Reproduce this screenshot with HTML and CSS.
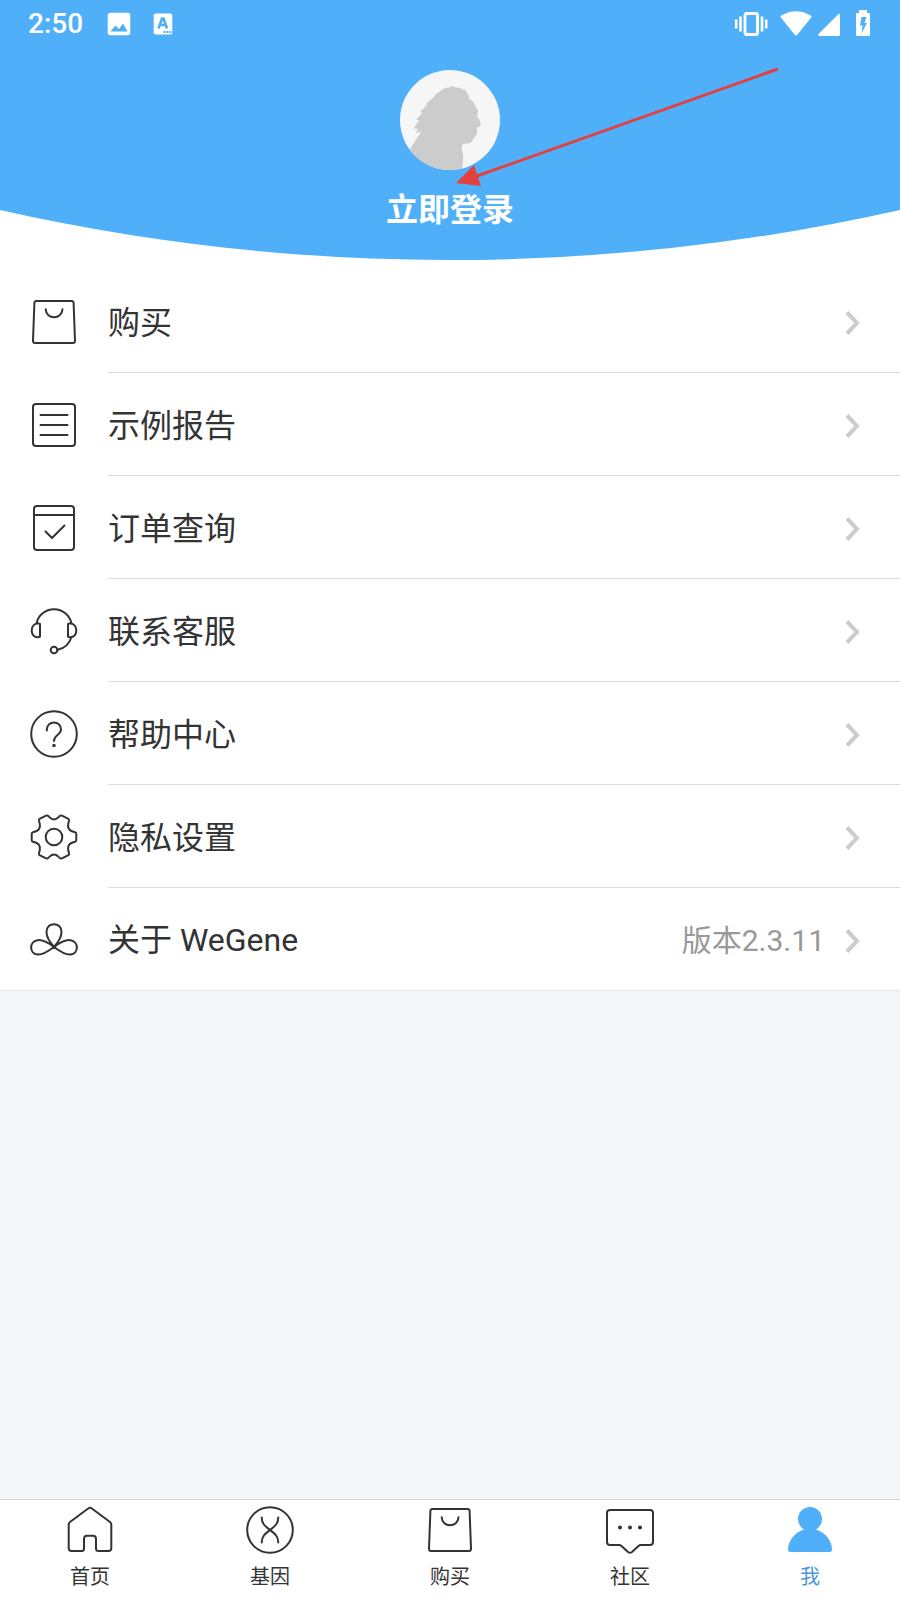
FILE: index.html
```html
<!DOCTYPE html>
<html lang="zh-CN">
<head>
<meta charset="utf-8">
<meta name="viewport" content="width=device-width, initial-scale=1">
<title>WeGene</title>
<link rel="stylesheet" href="styles.css">
</head>
<body>
<svg class="symbols" aria-hidden="true">
  <symbol id="bag" viewBox="0 0 48 48"><path d="M6.500 3H41.500Q43.500 3 43.600 5L45 42.500Q45 45 43 45H5Q3 45 3 42.500L4.400 5Q4.500 3 6.500 3Z"/><path d="M15.700 11.300C16 22 32 22 32.500 11.300"/></symbol>
  <symbol id="chevron" viewBox="0 0 16 24"><path d="M2 1.500L12 12L2 22.500"/></symbol>
</svg>
<div class="page">
  <header class="hero">
    <svg class="hero-curve" viewBox="0 0 900 260" preserveAspectRatio="none" aria-hidden="true"><path d="M0 0H900V210A2050 2050 0 0 1 0 210Z"/></svg>
    <div class="status">
      <div class="status-side">
        <span class="clock">2:50</span>
        <svg class="image-icon" width="24" height="24" viewBox="0 0 24 24" aria-hidden="true"><rect x=".7" y=".7" width="22.600" height="22.600" rx="2.500" fill="#fff"/><path d="M3.500 19.500L8.500 13.500L12 17L16 11.500L20.500 19.500Z" fill="#4fb0f9"/></svg>
        <svg width="20" height="24" viewBox="0 0 20 24" aria-hidden="true"><rect x=".7" y="1.500" width="18.600" height="21" rx="2" fill="#fff"/><path d="M5.500 16.500L9 6.500H10.500L14 16.500M7 13H12.500" fill="none" stroke="#4fb0f9" stroke-width="2.600"/><path d="M10.500 20H18.500" stroke="#4fb0f9" stroke-width="1.800" stroke-dasharray="2 1"/></svg>
      </div>
      <div class="status-side">
        <svg width="34" height="28" viewBox="0 0 34 28" aria-hidden="true"><rect x="11" y="3.500" width="12.500" height="21" rx="1.500" fill="none" stroke="#fff" stroke-width="2.800"/><path d="M2.200 9.500V18.500M6.500 6.500V21.500M28 6.500V21.500M32.200 9.500V18.500" stroke="#fff" stroke-width="2.600"/></svg>
        <svg class="wifi-icon" width="32" height="28" viewBox="0 0 32 28" aria-hidden="true"><path d="M.8 7.500Q0 6.500 1.200 5.600Q16-3 30.800 5.600Q32 6.500 31.200 7.500L17.500 24.600Q16 26.500 14.500 24.600Z" fill="#fff"/></svg>
        <svg width="24" height="28" viewBox="0 0 24 28" aria-hidden="true"><path d="M1.500 24L21.500 4Q23 3 23 5V25Q23 26 22 26H2Q.5 25.500 1.500 24Z" fill="#fff"/></svg>
        <svg class="battery-icon" width="16" height="28" viewBox="0 0 16 28" aria-hidden="true"><path d="M4 0H12V3H14Q15 3 15 4V25Q15 26 14 26H2Q1 26 1 25V4Q1 3 2 3H4Z" fill="#fff"/><path d="M6.500 7H11.500L9.500 13H12L6.500 23.500L7.500 15.500H5Z" fill="#4fb0f9"/></svg>
      </div>
    </div>
    <a class="login" href="#login">
      <svg class="avatar" viewBox="0 0 100 100" aria-hidden="true">
        <defs><clipPath id="disc"><circle cx="50" cy="50" r="50"/></clipPath></defs>
        <circle cx="50" cy="50" r="50" fill="#f6f6f6"/>
        <path clip-path="url(#disc)" fill="#ccc" d="M0 95L9.300 80L21.700 61L16 63.500L17.700 58.700L13.500 58.500L19.500 50L16 49.500L22.700 42.700L20 42.300L27.300 34.500L26 34L35 26L34.500 25L40 21.500Q44 17.500 50 17.500L51 16L57 18L59 17.500L64 20L65 19.300L69 26.500L69 29Q74 31 75 35.500L78 40.700L77 46.700Q80 49 80.700 53Q81 57 77.300 57.300Q76.500 59 77.300 63L73.500 69Q71 73.500 68 73.500Q64 73 62.500 74.500Q61 78 63 84Q63.500 91 62 98.700L60 102H0Z"/>
      </svg>
      <span class="login-text">立即登录</span>
    </a>
    <svg class="pointer" viewBox="0 0 326 122" aria-hidden="true"><path d="M323 2L22 109" stroke="#e34040" stroke-width="3" fill="none"/><path d="M1 116L19 98L26 119Z" fill="#e34040"/></svg>
  </header>

  <main>
    <ul class="menu">
      <li><a href="#buy"><svg class="icon" aria-hidden="true"><use href="#bag"/></svg><span class="row"><span class="label">购买</span><svg class="chevron" aria-hidden="true"><use href="#chevron"/></svg></span></a></li>
      <li><a href="#report"><svg class="icon" viewBox="0 0 48 48" aria-hidden="true"><rect x="3" y="3" width="42" height="42" rx="3"/><path d="M10.500 14H37.500M10.500 24H37.500M10.500 34H37.500"/></svg><span class="row"><span class="label">示例报告</span><svg class="chevron" aria-hidden="true"><use href="#chevron"/></svg></span></a></li>
      <li><a href="#orders"><svg class="icon" viewBox="0 0 48 48" aria-hidden="true"><rect x="4" y="2" width="40" height="44" rx="3"/><path d="M4 11H44M15.500 27.500L22 34L34.500 21.500"/></svg><span class="row"><span class="label">订单查询</span><svg class="chevron" aria-hidden="true"><use href="#chevron"/></svg></span></a></li>
      <li><a href="#service"><svg class="icon" viewBox="0 0 48 48" aria-hidden="true"><path d="M6.500 16.500A17.800 17.500 0 0 1 41.500 16.500M10 17V29.500Q10 30 9 30C4.500 31 1.700 28 1.700 23.500S4.500 16 9 16.500Q10 16.500 10 17ZM38 17V29.500Q38 30 39 30C43.500 31 46.300 28 46.300 23.500S43.500 16 39 16.500Q38 16.500 38 17ZM41.500 30Q38 41 27.500 42.700"/><circle cx="24" cy="43" r="3.300"/></svg><span class="row"><span class="label">联系客服</span><svg class="chevron" aria-hidden="true"><use href="#chevron"/></svg></span></a></li>
      <li><a href="#help"><svg class="icon" viewBox="0 0 48 48" aria-hidden="true"><circle cx="24" cy="24" r="22.800"/><path d="M16.800 20.500V19.500C17 10 31 10 31 19.500C31 25 24 24.500 24 31"/><circle class="solid" cx="24" cy="35.500" r=".8"/></svg><span class="row"><span class="label">帮助中心</span><svg class="chevron" aria-hidden="true"><use href="#chevron"/></svg></span></a></li>
      <li><a href="#privacy"><svg class="icon" viewBox="0 0 48 48" aria-hidden="true"><path d="M17.700 2.700C20 4 20.500 6.500 24 6.500S28 4 30.300 2.700Q31.500 2.200 32.500 2.800L38 5.700Q39.500 6.500 39 8C37.500 12 37.500 13.500 39 16C40.500 18.500 42.500 18.700 45 19.200Q46.300 19.500 46.300 21V27Q46.300 28.500 45 28.800C42.500 29.300 40.500 29.500 39 32C37.500 34.500 37.500 36 39 40Q39.500 41.500 38 42.300L32.500 45.200Q31.500 45.800 30.300 45.300C28 44 27.500 41.500 24 41.500S20 44 17.700 45.300Q16.500 45.800 15.500 45.200L10 42.300Q8.500 41.500 9 40C10.500 36 10.500 34.500 9 32C7.500 29.500 5.500 29.300 3 28.800Q1.700 28.500 1.700 27V21Q1.700 19.500 3 19.200C5.500 18.700 7.500 18.500 9 16C10.500 13.500 10.500 12 9 8Q8.500 6.500 10 5.700L15.500 2.800Q16.500 2.200 17.700 2.700Z"/><circle cx="24" cy="24" r="8.300"/></svg><span class="row"><span class="label">隐私设置</span><svg class="chevron" aria-hidden="true"><use href="#chevron"/></svg></span></a></li>
      <li><a href="#about"><svg class="icon" viewBox="0 0 48 48" aria-hidden="true"><path d="M24 32C20 27.500 16.500 21.500 16.500 17C16.500 6.500 31.500 6.500 31.500 17C31.500 21.500 28 27.500 24 32C18 27.500 12 24.500 7.500 25.200C-1 26.500 -1 38.500 7.500 39.500C12 40 18 36.500 24 32C30 36.500 36 40 40.500 39.500C49 38.500 49 26.500 40.500 25.200C36 24.500 30 27.500 24 32Z"/></svg><span class="row"><span class="label">关于 WeGene<span class="version">版本2.3.11</span></span><svg class="chevron" aria-hidden="true"><use href="#chevron"/></svg></span></a></li>
    </ul>
  </main>

  <nav class="tabs">
    <a href="#home"><svg class="icon" viewBox="0 0 48 48" aria-hidden="true"><path d="M22.500 2.300Q24 1.100 25.500 2.300L44 16Q45.300 17 45.300 18.500V42Q45.300 45 42.500 45H32.500Q30 45 30 42.500V33Q30 29.700 27 29.700H21Q18 29.700 18 33V42.500Q18 45 15.500 45H5.500Q2.700 45 2.700 42V18.500Q2.700 17 4 16Z"/></svg><span>首页</span></a>
    <a href="#gene"><svg class="icon" viewBox="0 0 48 48" aria-hidden="true"><circle cx="24" cy="24" r="22.800"/><path d="M15.700 11.500C15.700 18 19.500 20.500 24 24S32.300 30 32.300 36.500M32.300 11.500C32.300 18 28.500 20.500 24 24S15.700 30 15.700 36.500"/></svg><span>基因</span></a>
    <a href="#shop"><svg class="icon" aria-hidden="true"><use href="#bag"/></svg><span>购买</span></a>
    <a href="#community"><svg class="icon" viewBox="0 0 48 48" aria-hidden="true"><path d="M4 4H44Q47 4 47 7V36Q47 39 44 39H35Q33.500 39 32.500 40L26 46Q24 47.500 22 46L15.500 40Q14.500 39 13 39H4Q1 39 1 36V7Q1 4 4 4Z"/><g class="solid"><circle cx="14" cy="21.500" r="1"/><circle cx="24" cy="21.500" r="1"/><circle cx="34" cy="21.500" r="1"/></g></svg><span>社区</span></a>
    <a class="active" href="#me" aria-current="page"><svg class="icon" viewBox="0 0 48 48" aria-hidden="true"><circle cx="24" cy="13" r="12"/><path d="M18 23.500H30C39 26 46 35 46 43.500Q46 46 43.500 46H4.500Q2 46 2 43.500C2 35 9 26 18 23.500Z"/></svg><span>我</span></a>
  </nav>
</div>
</body>
</html>
```

FILE: styles.css
```css
* {
  box-sizing: border-box;
}

body {
  margin: 0;
  background: #f3f7fa;
  color: #333;
  font-family: Roboto, "Noto Sans CJK SC", sans-serif;
}

a {
  color: inherit;
  text-decoration: none;
}

svg {
  display: block;
  flex: none;
}

.symbols {
  position: absolute;
  width: 0;
  height: 0;
}

.page {
  display: flex;
  flex-direction: column;
  min-height: 100vh;
}

.hero {
  position: relative;
  padding-bottom: 30px;
  background: #fff;
  color: #fff;
}

.hero-curve {
  position: absolute;
  inset: 0;
  width: 100%;
  height: 100%;
  fill: #4fb0f9;
}

.status {
  position: relative;
  display: flex;
  justify-content: space-between;
  height: 48px;
  padding: 0 29px 0 28px;
}

.status-side {
  display: flex;
  align-items: center;
}

.clock {
  margin-right: 24px;
  font-size: 28px;
  font-weight: 500;
  line-height: 50px;
}

.image-icon {
  margin-right: 22px;
}

.wifi-icon {
  margin: 0 5px 0 12px;
}

.battery-icon {
  margin-left: 14px;
}

.login {
  position: relative;
  display: flex;
  flex-direction: column;
  align-items: center;
  gap: 20px;
  width: fit-content;
  margin: 22px auto 0;
}

.avatar {
  width: 100px;
  height: 100px;
}

.login-text {
  font-size: 32px;
  font-weight: 700;
  line-height: 40px;
}

.pointer {
  position: absolute;
  top: 67px;
  left: 50%;
  width: 326px;
  margin-left: 5px;
}

.menu {
  margin: 0;
  padding: 10px 0 0;
  border-bottom: 1px solid #e3e8ec;
  background: #fff;
  list-style: none;
}

.menu a {
  display: flex;
  align-items: center;
  gap: 30px;
  padding-left: 30px;
}

.icon {
  width: 48px;
  height: 48px;
  fill: none;
  stroke: #333;
  stroke-width: 2;
  stroke-linecap: round;
  stroke-linejoin: round;
}

.solid {
  fill: #333;
}

.row {
  display: flex;
  flex: 1;
  align-items: center;
  height: 103px;
  padding: 3px 39px 0 0;
  border-bottom: 1px solid #ddd;
}

.menu li:last-child .row {
  height: 102px;
  border-bottom: 0;
}

.label {
  display: flex;
  flex: 1;
  align-items: baseline;
  justify-content: space-between;
  font-size: 32px;
  line-height: 48px;
}

.version {
  margin-right: 20px;
  color: #999;
  font-size: 30px;
}

.chevron {
  width: 16px;
  height: 24px;
  fill: none;
  stroke: #ccc;
  stroke-width: 4;
}

.tabs {
  display: grid;
  grid-template-columns: repeat(5, 1fr);
  margin-top: auto;
  padding: 6px 0 8px;
  border-top: 1px solid #d2d4d6;
  background: #fff;
}

.tabs a {
  display: flex;
  flex-direction: column;
  align-items: center;
  gap: 8px;
  font-size: 20px;
  line-height: 30px;
}

.tabs .active {
  color: #4a97d8;
}

.active .icon {
  fill: #4fb0f9;
  stroke: none;
}
```
